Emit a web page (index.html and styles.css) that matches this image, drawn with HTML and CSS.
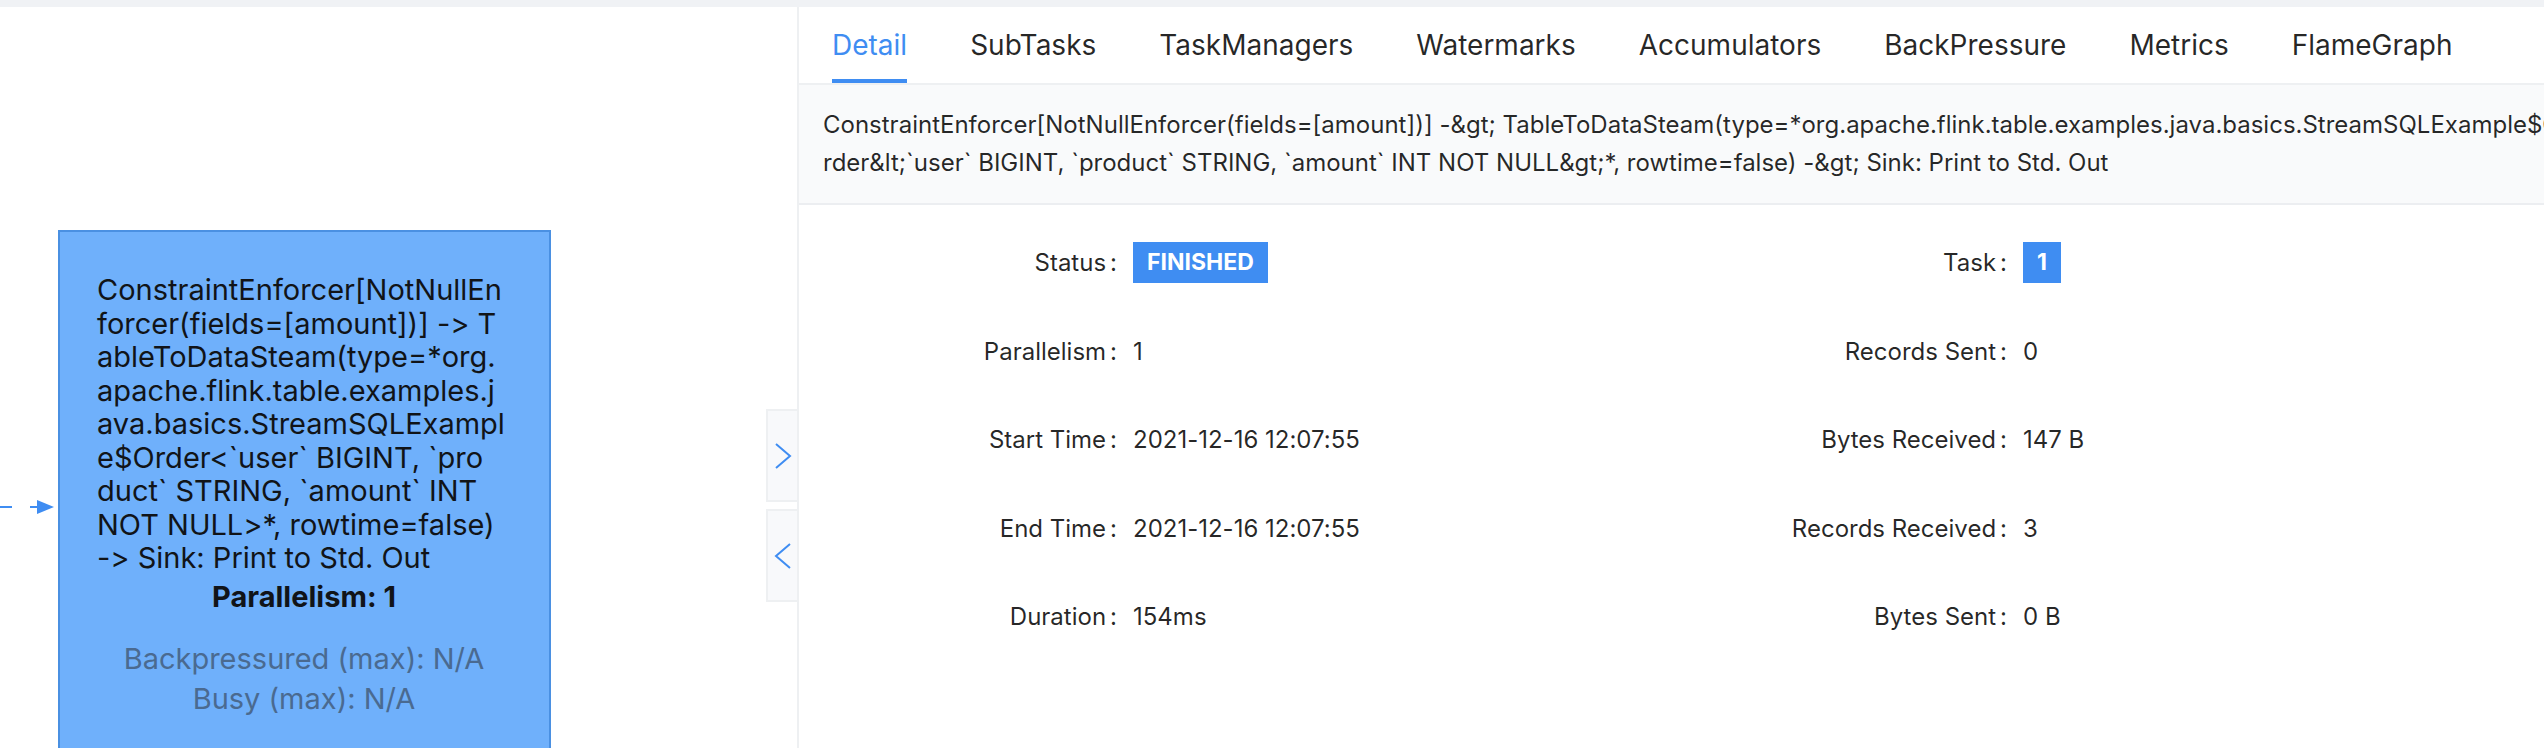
FILE: index.html
```html
<!DOCTYPE html>
<html lang="en">
<head>
<meta charset="UTF-8">
<meta name="viewport" content="width=device-width, initial-scale=1.0">
<title>Job Vertex Detail</title>
<link rel="stylesheet" href="styles.css">
</head>
<body>
  <!-- top strip of the app shell -->
  <div class="top-strip"></div>

  <div class="main">
    <!-- job graph canvas -->
    <div class="graph">
      <svg class="edge" width="60" height="20" viewBox="0 0 60 20">
        <line x1="0" y1="10" x2="12" y2="10" stroke="#3f8df2" stroke-width="2"/>
        <line x1="30" y1="10" x2="40" y2="10" stroke="#3f8df2" stroke-width="2"/>
        <polygon points="37,3 54,10 37,17" fill="#3f8df2"/>
      </svg>

      <div class="node">
        <!-- label lines as laid out by the graph renderer -->
        <div class="node-name">
          <span>ConstraintEnforcer[NotNullEn</span>
          <span>forcer(fields=[amount])] -&gt; T</span>
          <span>ableToDataSteam(type=*org.</span>
          <span>apache.flink.table.examples.j</span>
          <span>ava.basics.StreamSQLExampl</span>
          <span>e$Order&lt;`user` BIGINT, `pro</span>
          <span>duct` STRING, `amount` INT</span>
          <span>NOT NULL&gt;*, rowtime=false)</span>
          <span>-&gt; Sink: Print to Std. Out</span>
        </div>
        <div class="node-parallelism">Parallelism: 1</div>
        <div class="node-metrics">
          <div>Backpressured (max): N/A</div>
          <div>Busy (max): N/A</div>
        </div>
      </div>

      <div class="toggle toggle-open">
        <svg width="18" height="26" viewBox="0 0 18 26"><path d="M2 1 L16 13 L2 25" fill="none" stroke="#3f8df2" stroke-width="2"/></svg>
      </div>
      <div class="toggle toggle-close">
        <svg width="18" height="26" viewBox="0 0 18 26"><path d="M16 1 L2 13 L16 25" fill="none" stroke="#3f8df2" stroke-width="2"/></svg>
      </div>
    </div>

    <!-- vertex drawer -->
    <div class="drawer">
      <div class="tabs">
        <div class="tab active">Detail</div>
        <div class="tab">SubTasks</div>
        <div class="tab">TaskManagers</div>
        <div class="tab">Watermarks</div>
        <div class="tab">Accumulators</div>
        <div class="tab">BackPressure</div>
        <div class="tab">Metrics</div>
        <div class="tab">FlameGraph</div>
      </div>

      <div class="vertex-name">
        <span>ConstraintEnforcer[NotNullEnforcer(fields=[amount])] -&amp;gt; TableToDataSteam(type=*org.apache.flink.table.examples.java.basics.StreamSQLExample$O</span>
        <span>rder&amp;lt;`user` BIGINT, `product` STRING, `amount` INT NOT NULL&amp;gt;*, rowtime=false) -&amp;gt; Sink: Print to Std. Out</span>
      </div>

      <div class="details">
        <div class="label">Status</div>
        <div class="value"><span class="tag">FINISHED</span></div>
        <div class="label">Task</div>
        <div class="value"><span class="tag">1</span></div>

        <div class="label">Parallelism</div>
        <div class="value">1</div>
        <div class="label">Records Sent</div>
        <div class="value">0</div>

        <div class="label">Start Time</div>
        <div class="value">2021-12-16 12:07:55</div>
        <div class="label">Bytes Received</div>
        <div class="value">147 B</div>

        <div class="label">End Time</div>
        <div class="value">2021-12-16 12:07:55</div>
        <div class="label">Records Received</div>
        <div class="value">3</div>

        <div class="label">Duration</div>
        <div class="value">154ms</div>
        <div class="label">Bytes Sent</div>
        <div class="value">0 B</div>
      </div>
    </div>
  </div>
</body>
</html>
```

FILE: styles.css
```css
/* base */
body {
  margin: 0;
  padding: 0;
  background-color: #fff;
  color: rgba(0, 0, 0, 0.85);
  font-family: Inter, "Liberation Sans", sans-serif;
  font-variant-ligatures: none;
  font-feature-settings: "calt" 0, "liga" 0;
  overflow: hidden;
  width: 2544px;
  height: 748px;
}
.top-strip {
  height: 7px;
  background-color: #f0f2f5;
}
.main {
  display: flex;
  height: 741px;
}

/* graph canvas */
.graph {
  position: relative;
  flex: 0 0 797px;
  overflow: hidden;
}
.edge {
  position: absolute;
  left: 0;
  top: 490px;
}
.node {
  position: absolute;
  left: 58px;
  top: 223px;
  width: 493px;
  height: 560px;
  box-sizing: border-box;
  border: 2px solid #4a90e2;
  background-color: #6fb0fb;
  padding: 41px 30px 0 37px;
  color: #111418;
  font-size: 29px;
}
.node-name {
  line-height: 33.5px;
}
.node-name span {
  display: block;
  white-space: nowrap;
}
.node-parallelism {
  margin-top: 5px;
  line-height: 33.5px;
  font-weight: bold;
  text-align: center;
  padding-right: 8px;
}
.node-metrics {
  margin-top: 26px;
  line-height: 40px;
  text-align: center;
  padding-right: 8px;
  color: #4a6a90;
}
.toggle {
  position: absolute;
  left: 766px;
  width: 31px;
  height: 93px;
  box-sizing: border-box;
  border: 2px solid #eef0f2;
  border-right: none;
  background-color: #f8f9fb;
  display: flex;
  align-items: center;
  justify-content: center;
}
.toggle-open {
  top: 402px;
}
.toggle-close {
  top: 502px;
}

/* drawer */
.drawer {
  flex: 0 0 1800px;
  border-left: 2px solid #eef0f2;
}
.tabs {
  display: flex;
  gap: 63px;
  height: 76px;
  padding-left: 33px;
  border-bottom: 2px solid #eef0f2;
  font-size: 28px;
}
.tab {
  position: relative;
  display: flex;
  align-items: center;
}
.tab.active {
  color: #3f8df2;
}
.tab.active::after {
  content: "";
  position: absolute;
  left: 0;
  right: 0;
  bottom: 0;
  height: 4px;
  background-color: #3f8df2;
}
.vertex-name {
  padding: 21px 24px;
  background-color: #f9fafb;
  border-bottom: 2px solid #eceef1;
  font-size: 24px;
  line-height: 38px;
}
.vertex-name span {
  display: block;
  white-space: nowrap;
}
.details {
  display: grid;
  grid-template-columns: 300px 590px 300px 590px;
  grid-auto-rows: 41px;
  row-gap: 47.5px;
  align-items: center;
  padding: 37px 0 0 34px;
  font-size: 24px;
}
.label {
  text-align: right;
}
.label::after {
  content: ":";
  margin: 0 16px 0 4px;
}
.tag {
  display: inline-block;
  height: 41px;
  line-height: 41px;
  padding: 0 14px;
  background-color: #3f8df2;
  color: #fff;
  font-size: 23px;
  font-weight: bold;
  vertical-align: middle;
}
```
